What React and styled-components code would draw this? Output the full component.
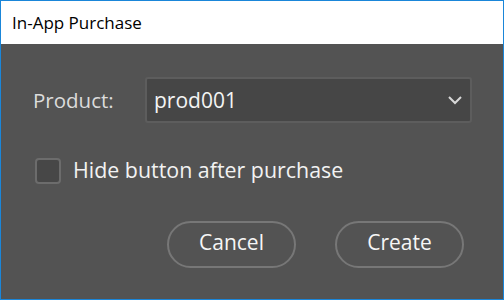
import React from "react";
import styled, { createGlobalStyle } from "styled-components";

const Global = createGlobalStyle`
  html, body { margin: 0; padding: 0; background: #535353; }
  * { box-sizing: border-box; }
`;

const Window = styled.div`
  width: 504px;
  height: 300px;
  border: 1px solid #1a86d9;
  display: flex;
  flex-direction: column;
  background: #535353;
  font-family: "Open Sans", "Noto Sans", sans-serif;
`;

const TitleBar = styled.div`
  height: 43px;
  flex: none;
  background: #ffffff;
  color: #000;
  font-size: 17px;
  display: flex;
  align-items: center;
  padding-left: 11px;
`;

const Body = styled.div`
  flex: 1;
  display: flex;
  flex-direction: column;
  padding: 33px 31px 0 32px;
  color: #f2f2f2;
`;

const Row = styled.div`
  display: flex;
  align-items: center;
`;

const Label = styled.span`
  width: 112px;
  font-size: 20.5px;
  color: #dcdcdc;
  padding-bottom: 1px;
`;

const Select = styled.div`
  flex: 1;
  height: 46px;
  border: 2px solid #5d5d5d;
  border-radius: 3px;
  background: #464646;
  display: flex;
  align-items: center;
  justify-content: space-between;
  padding: 0 7px 1px 7px;
  font-size: 21px;
  color: #f4f4f4;
`;

const CheckRow = styled(Row)`
  height: 26px;
  margin-top: 35px;
  padding-left: 2px;
  gap: 12px;
  font-size: 21.4px;
`;

const Box = styled.span`
  width: 26px;
  height: 26px;
  border: 2px solid #6c6c6c;
  border-radius: 4px;
  background: #474747;
`;

const CheckText = styled.span`
  padding-bottom: 4px;
`;

const Buttons = styled.div`
  margin-top: 37px;
  display: flex;
  justify-content: flex-end;
  gap: 39px;
  padding-right: 8px;
`;

const Button = styled.button`
  width: 129px;
  height: 47px;
  border-radius: 24px;
  border: 2px solid #777777;
  background: transparent;
  color: #f6f6f6;
  font-family: inherit;
  font-size: 21px;
  padding: 0 0 5px;
`;

export default function App() {
  return (
    <>
      <Global />
      <Window>
        <TitleBar>In-App Purchase</TitleBar>
        <Body>
          <Row>
            <Label>Product:</Label>
            <Select>
              <span>prod001</span>
              <svg width="16" height="10" viewBox="0 0 16 10">
                <path d="M2 2 L8 8 L14 2" fill="none" stroke="#d8d8d8" strokeWidth="2" />
              </svg>
            </Select>
          </Row>
          <CheckRow>
            <Box />
            <CheckText>Hide button after purchase</CheckText>
          </CheckRow>
          <Buttons>
            <Button>Cancel</Button>
            <Button>Create</Button>
          </Buttons>
        </Body>
      </Window>
    </>
  );
}
